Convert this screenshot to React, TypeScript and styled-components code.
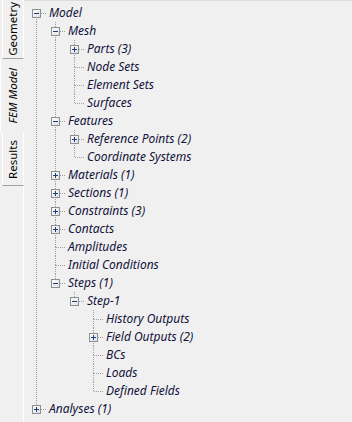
import styled, { createGlobalStyle } from 'styled-components';

interface TreeNode {
  label: string;
  expanded?: boolean;
  collapsed?: boolean;
  children?: TreeNode[];
}

interface FlatRow {
  node: TreeNode;
  level: number;
  // for each ancestor level: does that ancestor have a following sibling
  guides: boolean[];
  hasNext: boolean;
  hasPrev: boolean;
}

const TREE: TreeNode[] = [
  {
    label: 'Model',
    expanded: true,
    children: [
      {
        label: 'Mesh',
        expanded: true,
        children: [
          { label: 'Parts (3)', collapsed: true },
          { label: 'Node Sets' },
          { label: 'Element Sets' },
          { label: 'Surfaces' },
        ],
      },
      {
        label: 'Features',
        expanded: true,
        children: [
          { label: 'Reference Points (2)', collapsed: true },
          { label: 'Coordinate Systems' },
        ],
      },
      { label: 'Materials (1)', collapsed: true },
      { label: 'Sections (1)', collapsed: true },
      { label: 'Constraints (3)', collapsed: true },
      { label: 'Contacts', collapsed: true },
      { label: 'Amplitudes' },
      { label: 'Initial Conditions' },
      {
        label: 'Steps (1)',
        expanded: true,
        children: [
          {
            label: 'Step-1',
            expanded: true,
            children: [
              { label: 'History Outputs' },
              { label: 'Field Outputs (2)', collapsed: true },
              { label: 'BCs' },
              { label: 'Loads' },
              { label: 'Defined Fields' },
            ],
          },
        ],
      },
    ],
  },
  { label: 'Analyses (1)', collapsed: true },
];

const TABS = [
  { label: 'Geometry', height: 59 },
  { label: 'FEM Model', height: 74, active: true },
  { label: 'Results', height: 53 },
];

const flatten = (nodes: TreeNode[], level: number, guides: boolean[], isRoot: boolean): FlatRow[] => {
  const rows: FlatRow[] = [];
  nodes.forEach((node, i) => {
    const hasNext = i < nodes.length - 1;
    const hasPrev = !isRoot || i > 0;
    rows.push({ node, level, guides, hasNext, hasPrev });
    if (node.expanded && node.children) {
      rows.push(...flatten(node.children, level + 1, [...guides, hasNext], false));
    }
  });
  return rows;
};

const GlobalStyle = createGlobalStyle`
  html, body {
    margin: 0;
    padding: 0;
    background: #f0f0f0;
  }
`;

const Window = styled.div`
  width: 352px;
  height: 422px;
  display: flex;
  background: #f0f0f0;
  overflow: hidden;
  font-family: 'Noto Sans', 'Open Sans', sans-serif;
`;

const TabStrip = styled.div`
  width: 24px;
  flex-shrink: 0;
  display: flex;
  flex-direction: column;
  align-items: flex-end;
`;

const Tab = styled.div<{ $active?: boolean; $h: number }>`
  box-sizing: border-box;
  width: ${(p) => (p.$active ? 24 : 22)}px;
  height: ${(p) => p.$h}px;
  display: flex;
  align-items: center;
  justify-content: center;
  background: #f0f0f0;
  border-left: 1px solid #ffffff;
  border-bottom: 1px solid ${(p) => (p.$active ? '#f0f0f0' : '#a0a0a0')};
  border-right: ${(p) => (p.$active ? 'none' : '1px solid #ffffff')};
  position: relative;
  z-index: ${(p) => (p.$active ? 1 : 0)};
`;

const TabLabel = styled.span<{ $active?: boolean }>`
  writing-mode: vertical-rl;
  transform: rotate(180deg);
  font-size: 11.5px;
  font-style: ${(p) => (p.$active ? 'italic' : 'normal')};
  color: #000;
  white-space: nowrap;
  line-height: 1;
`;

const Panel = styled.div`
  flex: 1;
  box-sizing: border-box;
  border-top: 1px solid #dcdcdc;
  border-left: 1px solid #ffffff;
  padding: 3px 0 0 3px;
  margin-left: -1px;
`;

const Row = styled.div`
  height: 18px;
  display: flex;
  align-items: center;
`;

const Cell = styled.svg`
  width: 19px;
  height: 18px;
  flex-shrink: 0;
  display: block;
`;

const Label = styled.span`
  margin-left: 3px;
  font-size: 12px;
  font-style: italic;
  color: #12123a;
  white-space: nowrap;
  line-height: 18px;
`;

const LINE = '#a0a0a0';

const Guide = ({ on }: { on: boolean }) => (
  <Cell viewBox="0 0 19 18">
    {on && <line x1="9.5" y1="0" x2="9.5" y2="18" stroke={LINE} strokeDasharray="1 1" />}
  </Cell>
);

const Connector = ({ row }: { row: FlatRow }) => {
  const { node, hasNext, hasPrev } = row;
  const box = node.expanded || node.collapsed;
  return (
    <Cell viewBox="0 0 19 18">
      {hasPrev && <line x1="9.5" y1="0" x2="9.5" y2="9" stroke={LINE} strokeDasharray="1 1" />}
      {hasNext && <line x1="9.5" y1="9" x2="9.5" y2="18" stroke={LINE} strokeDasharray="1 1" />}
      <line x1="10" y1="9.5" x2="19" y2="9.5" stroke={LINE} strokeDasharray="1 1" />
      {box && (
        <>
          <defs>
            <linearGradient id="bx" x1="0" y1="0" x2="1" y2="1">
              <stop offset="0" stopColor="#ffffff" />
              <stop offset="1" stopColor="#dedede" />
            </linearGradient>
          </defs>
          <rect x="5.5" y="5.5" width="8" height="8" fill="url(#bx)" stroke="#8e8f8f" />
          <line x1="7" y1="9.5" x2="12" y2="9.5" stroke="#1f3c82" />
          {node.collapsed && <line x1="9.5" y1="7" x2="9.5" y2="12" stroke="#1f3c82" />}
        </>
      )}
    </Cell>
  );
};

const App = () => {
  const rows = flatten(TREE, 0, [], true);
  return (
    <>
      <GlobalStyle />
      <Window>
        <TabStrip>
          {TABS.map((t) => (
            <Tab key={t.label} $active={t.active} $h={t.height}>
              <TabLabel $active={t.active}>{t.label}</TabLabel>
            </Tab>
          ))}
        </TabStrip>
        <Panel>
          {rows.map((row, i) => (
            <Row key={i}>
              {row.guides.map((g, k) => (
                <Guide key={k} on={g} />
              ))}
              <Connector row={row} />
              <Label>{row.node.label}</Label>
            </Row>
          ))}
        </Panel>
      </Window>
    </>
  );
};

export default App;
